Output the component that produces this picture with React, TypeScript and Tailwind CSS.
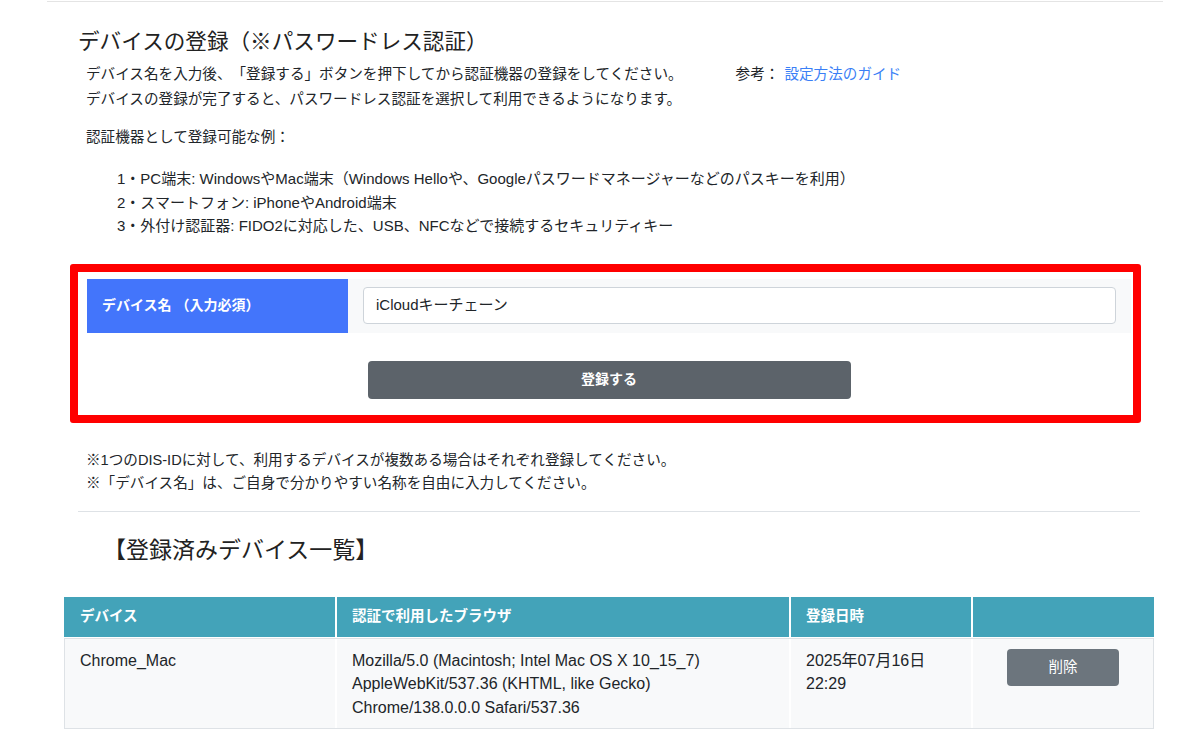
import React from "react";

const font = "font-['Liberation_Sans','Noto_Sans_CJK_JP',sans-serif]";

const examples = [
  "1・PC端末: WindowsやMac端末（Windows Helloや、Googleパスワードマネージャーなどのパスキーを利用）",
  "2・スマートフォン: iPhoneやAndroid端末",
  "3・外付け認証器: FIDO2に対応した、USB、NFCなどで接続するセキュリティキー",
];

function DeviceTable() {
  return (
    <div className="ml-[64px] mt-[33px] w-[1090px]">
      {/* header */}
      <div className="grid grid-cols-[271px_452px_180px_181px] gap-x-[2px] bg-white">
        <div className="h-[40px] bg-[#43a3b9] pl-4 flex items-center text-white text-[14.5px] font-bold">
          デバイス
        </div>
        <div className="h-[40px] bg-[#43a3b9] pl-[15px] flex items-center text-white text-[14.5px] font-bold">
          認証で利用したブラウザ
        </div>
        <div className="h-[40px] bg-[#43a3b9] pl-[15px] flex items-center text-white text-[14.5px] font-bold">
          登録日時
        </div>
        <div className="h-[40px] bg-[#43a3b9]" />
      </div>
      {/* body */}
      <div className="mt-px border border-[#dee2e6] grid grid-cols-[270px_452px_180px_180px] gap-x-[2px] bg-white text-[16px] leading-[23.5px] text-[#212529]">
        <div className="bg-[#f8f9fa] pl-[15px] pt-[10px] pb-[9px]">Chrome_Mac</div>
        <div className="bg-[#f8f9fa] pl-[15px] pt-[10px] pb-[9px]">
          Mozilla/5.0 (Macintosh; Intel Mac OS X 10_15_7)
          <br />
          AppleWebKit/537.36 (KHTML, like Gecko)
          <br />
          Chrome/138.0.0.0 Safari/537.36
        </div>
        <div className="bg-[#f8f9fa] pl-[15px] pt-[10px] pb-[9px]">
          2025年07月16日
          <br />
          22:29
        </div>
        <div className="bg-[#f8f9fa] pt-[10px] flex justify-center items-start">
          <button className="w-[112px] h-[37px] rounded-[4px] bg-[#6c757d] text-white text-[14.5px] leading-none">
            削除
          </button>
        </div>
      </div>
    </div>
  );
}

export default function App() {
  return (
    <div
      className={`${font} [text-spacing-trim:space-all] w-[1191px] min-h-[737px] bg-white text-[#212529] pt-px pb-[10px]`}
    >
      <div className="ml-[47px] w-[1116px] h-px bg-[#e4e4e4]" />

      <h1 className="ml-[78px] mt-[27px] text-[21.6px] leading-[26px] text-[#222]">
        デバイスの登録（※パスワードレス認証）
      </h1>

      <div className="ml-[86px] mt-[7px] text-[14.6px] leading-[25px]">
        <p>
          デバイス名を入力後、「登録する」ボタンを押下してから認証機器の登録をしてください。
          <span className="ml-[53px]">参考：</span>
          <a className="ml-[5px] text-[#3a7ff6]">設定方法のガイド</a>
        </p>
        <p>デバイスの登録が完了すると、パスワードレス認証を選択して利用できるようになります。</p>
        <p className="mt-[13px]">認証機器として登録可能な例：</p>
      </div>

      <ul className="ml-[117px] mt-[17px] text-[15px] leading-[23.5px]">
        {examples.map((e) => (
          <li key={e}>{e}</li>
        ))}
      </ul>

      {/* registration form */}
      <div className="ml-[70px] mt-[26px] w-[1071px] border-[8px] border-[#ff0000] rounded-[3px] pt-[7px] pb-[16px]">
        <div className="ml-[9px] w-[1044px] flex h-[54px]">
          <div className="w-[261px] bg-[#4375fb] pl-[15px] flex items-center text-white text-[14px] font-bold">
            デバイス名 （入力必須）
          </div>
          <div className="flex-1 bg-[#f8f9fa] px-[15px] flex items-center">
            <div className="w-full h-[37px] bg-white border border-[#ced4da] rounded-[4px] pl-[12px] flex items-center text-[15px]">
              iCloudキーチェーン
            </div>
          </div>
        </div>
        <div className="ml-[9px] w-[1044px] mt-[28px] flex justify-center">
          <button className="w-[483px] h-[38px] rounded-[4px] bg-[#5c636a] text-white text-[14px] font-bold">
            登録する
          </button>
        </div>
      </div>

      <div className="ml-[86px] mt-[26px] text-[14.6px] leading-[23px]">
        <p>※1つのDIS-IDに対して、利用するデバイスが複数ある場合はそれぞれ登録してください。</p>
        <p>※「デバイス名」は、ご自身で分かりやすい名称を自由に入力してください。</p>
      </div>

      <div className="ml-[78px] mt-[16px] w-[1062px] h-px bg-[#dee2e6]" />

      <h2 className="ml-[103px] mt-[24px] text-[23px] leading-[28px] text-[#222]">
        【登録済みデバイス一覧】
      </h2>

      <DeviceTable />
    </div>
  );
}
